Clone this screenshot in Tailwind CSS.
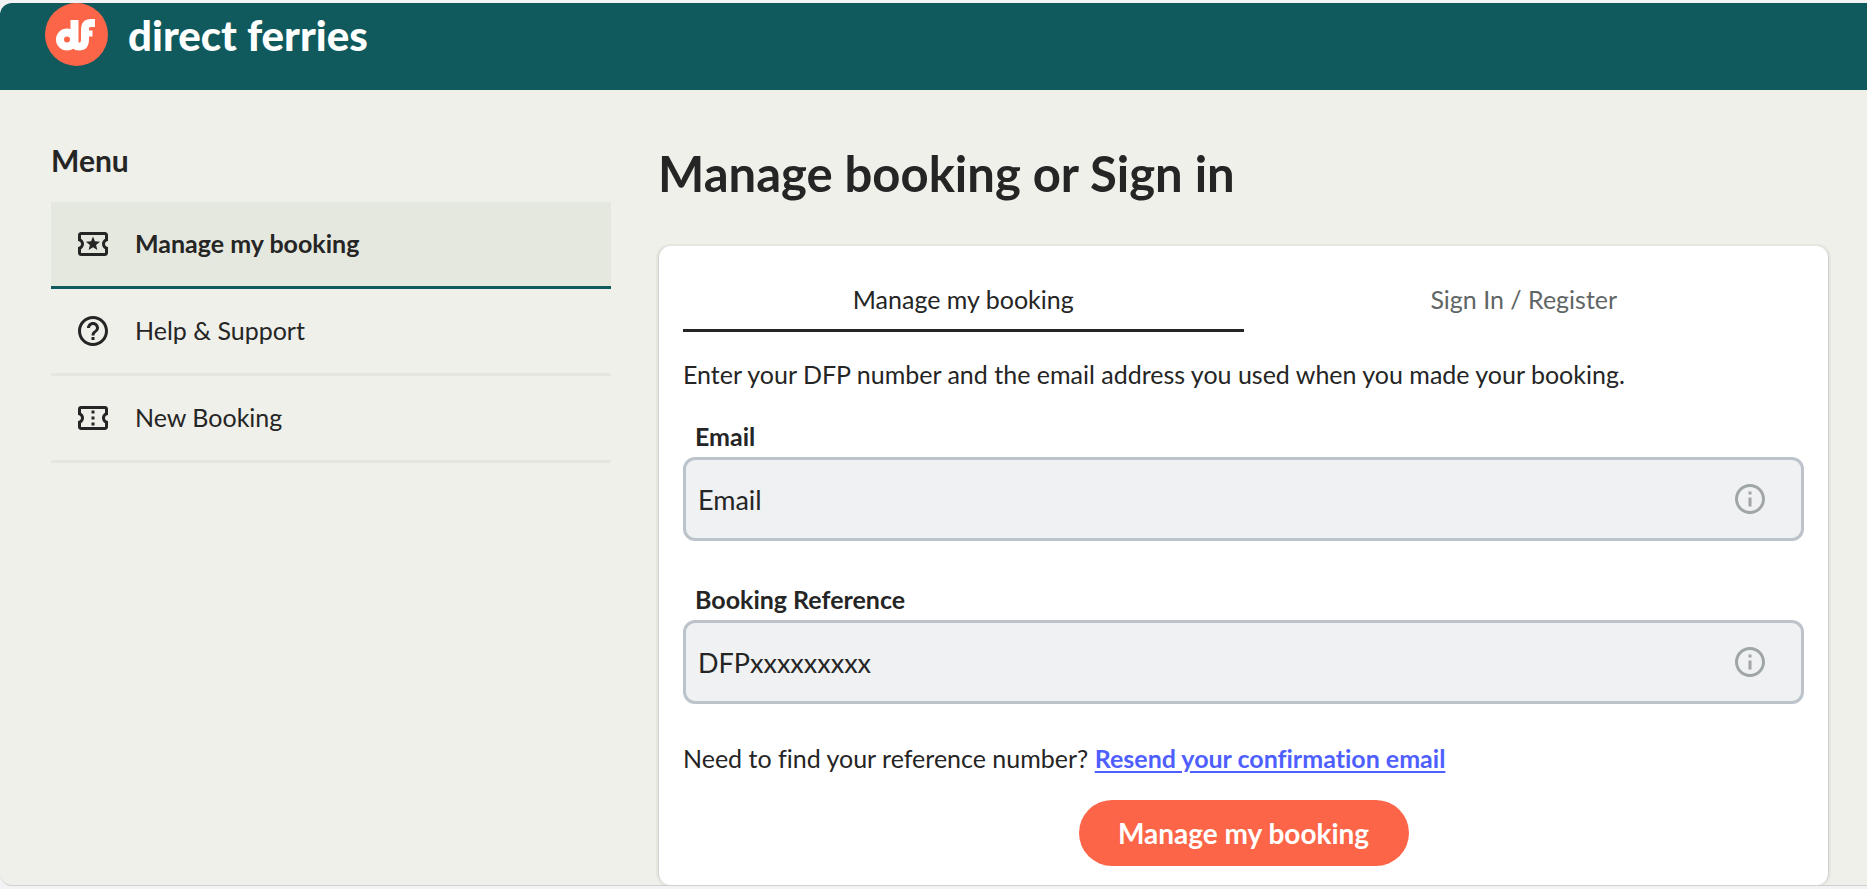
<!DOCTYPE html>
<html lang="en">

<head>
    <meta charset="utf-8" />
    <meta name="viewport" content="width=device-width, initial-scale=1" />
    <title>Manage booking or Sign in</title>
    <script src="https://cdn.jsdelivr.net/npm/@tailwindcss/browser@4"></script>
</head>

<body class="flex h-screen flex-col overflow-hidden bg-[#f3f3f5] py-[3px] font-['Lato','Noto_Sans',sans-serif] text-[#252525] [font-variant-ligatures:none]">

    <div class="flex-1 overflow-hidden rounded-l-xl border-b border-[#cfd0d0] bg-[#eff0ea]">
        <header class="h-[87px] bg-[#105a5d] pl-[45px]">
            <a href="#" class="flex w-fit items-center gap-5 text-white">
                <svg class="size-[63px]" viewBox="0 0 63 63" fill="none" aria-hidden="true">
                    <circle cx="31.5" cy="31.5" r="31.5" fill="#fd6548" />
                    <g stroke="#fff" stroke-width="8">
                        <circle cx="22" cy="36.500" r="7" />
                        <path d="M29.500 17V39Q29.500 43.500 34 43.500Q40 43.500 40 36V27Q40 20 46 20H50" />
                        <path d="M36 30.500H47.500" stroke-width="6" />
                    </g>
                </svg>
                <span class="text-[42px] leading-[56px] font-black">direct ferries</span>
            </a>
        </header>

        <div class="flex gap-[47px] pr-[38px] pl-[51px]">
            <nav class="w-[560px] shrink-0 pt-[54px] text-[25px]" aria-label="Menu">
                <h2 class="mb-[26px] text-[30px] leading-8 font-bold">Menu</h2>
                <ul>
                    <li>
                        <a href="#" class="flex h-[87px] items-center gap-6 border-b-[3px] border-[#105a5d] bg-[#e5e8de] pl-6 font-bold">
                            <svg class="size-9" viewBox="0 0 24 24" fill="currentColor" aria-hidden="true"><path d="M20 4H4c-1.100 0-2 .9-2 2v4c1.100 0 2 .9 2 2s-.9 2-2 2v4c0 1.100.9 2 2 2h16c1.100 0 2-.9 2-2v-4c-1.100 0-2-.9-2-2s.9-2 2-2V6c0-1.100-.9-2-2-2zm0 4.540c-1.200.69-2 1.990-2 3.460s.8 2.770 2 3.460V18H4v-2.540c1.200-.69 2-1.990 2-3.460 0-1.480-.79-2.770-1.990-3.460L4 6h16v2.540z" /><path d="M9.070 16 12 14.120 14.930 16l-.89-3.360 2.690-2.200-3.470-.21L12 7l-1.270 3.220-3.470.21 2.690 2.200z" /></svg>
                            Manage my booking
                        </a>
                    </li>
                    <li>
                        <a href="#" class="flex h-[87px] items-center gap-6 border-b-[3px] border-[#e5e7de] pl-6">
                            <svg class="size-9" viewBox="0 0 24 24" fill="currentColor" aria-hidden="true"><path d="M11 18h2v-2h-2v2zm1-16C6.480 2 2 6.480 2 12s4.480 10 10 10 10-4.480 10-10S17.520 2 12 2zm0 18c-4.410 0-8-3.590-8-8s3.590-8 8-8 8 3.590 8 8-3.590 8-8 8zm0-14c-2.210 0-4 1.790-4 4h2c0-1.100.9-2 2-2s2 .9 2 2c0 2-3 1.750-3 5h2c0-2.250 3-2.500 3-5 0-2.210-1.790-4-4-4z" /></svg>
                            Help &amp; Support
                        </a>
                    </li>
                    <li>
                        <a href="#" class="flex h-[87px] items-center gap-6 border-b-[3px] border-[#e5e7de] pl-6">
                            <svg class="size-9" viewBox="0 0 24 24" fill="currentColor" aria-hidden="true"><path d="M22 10V6c0-1.110-.9-2-2-2H4c-1.100 0-1.990.89-1.990 2v4c1.100 0 1.990.9 1.990 2s-.89 2-2 2v4c0 1.100.9 2 2 2h16c1.100 0 2-.9 2-2v-4c-1.100 0-2-.9-2-2s.9-2 2-2zm-2-1.460c-1.190.69-2 1.990-2 3.460s.81 2.770 2 3.460V18H4v-2.540c1.190-.69 2-1.990 2-3.460 0-1.480-.8-2.770-1.990-3.460L4 6h16v2.540zM11 15h2v2h-2zm0-4h2v2h-2zm0-4h2v2h-2z" /></svg>
                            New Booking
                        </a>
                    </li>
                </ul>
            </nav>

            <main class="min-w-0 flex-1 pt-[54px]">
                <h1 class="mb-11 text-[49px] leading-[58px] font-bold">Manage booking or Sign in</h1>

                <section class="rounded-xl border-x border-[#cfd1d1] bg-white px-6 pt-6 pb-[19px] text-[25px] shadow-[0_0_0_2px_#e5e7de]">
                    <div class="flex h-[62px]" role="tablist">
                        <button type="button" role="tab" aria-selected="true" class="flex-1 border-b-[3px] border-[#252525]">Manage my booking</button>
                        <button type="button" role="tab" aria-selected="false" class="flex-1 border-b-[3px] border-transparent text-[#5f6666]">Sign In / Register</button>
                    </div>

                    <form>
                        <p class="mt-6 leading-9">Enter your DFP number and the email address you used when you made your booking.</p>

                        <label for="email" class="mt-7 ml-3 block leading-8 font-bold">Email</label>
                        <div class="relative mt-[5px]">
                            <input id="email" type="email" placeholder="Email" class="block h-[84px] w-full rounded-xl border-[3px] border-[#bcc3ca] bg-[#eff1f2] pr-20 pl-3 text-[27px] placeholder:text-[#252525]" />
                            <svg class="absolute top-6 right-9 size-9 text-[#a0a5a7]" viewBox="0 0 24 24" fill="currentColor" aria-hidden="true"><path d="M11 7h2v2h-2zm0 4h2v6h-2zm1-9C6.480 2 2 6.480 2 12s4.480 10 10 10 10-4.480 10-10S17.520 2 12 2zm0 18c-4.410 0-8-3.590-8-8s3.590-8 8-8 8 3.590 8 8-3.590 8-8 8z" /></svg>
                        </div>

                        <label for="reference" class="mt-[42px] ml-3 block leading-8 font-bold">Booking Reference</label>
                        <div class="relative mt-[5px]">
                            <input id="reference" type="text" placeholder="DFPxxxxxxxxx" class="block h-[84px] w-full rounded-xl border-[3px] border-[#bcc3ca] bg-[#eff1f2] pr-20 pl-3 text-[27px] placeholder:text-[#252525]" />
                            <svg class="absolute top-6 right-9 size-9 text-[#a0a5a7]" viewBox="0 0 24 24" fill="currentColor" aria-hidden="true"><path d="M11 7h2v2h-2zm0 4h2v6h-2zm1-9C6.480 2 2 6.480 2 12s4.480 10 10 10 10-4.480 10-10S17.520 2 12 2zm0 18c-4.410 0-8-3.590-8-8s3.590-8 8-8 8 3.590 8 8-3.590 8-8 8z" /></svg>
                        </div>

                        <p class="mt-9 leading-9">Need to find your reference number? <a href="#" class="font-bold text-[#4f5fff] underline decoration-2 underline-offset-3">Resend your confirmation email</a></p>

                        <button type="submit" class="mx-auto mt-6 block h-[66px] w-[330px] rounded-full bg-[#fd6548] text-[28px] font-bold text-white">Manage my booking</button>
                    </form>
                </section>
            </main>
        </div>
    </div>
</body>

</html>
